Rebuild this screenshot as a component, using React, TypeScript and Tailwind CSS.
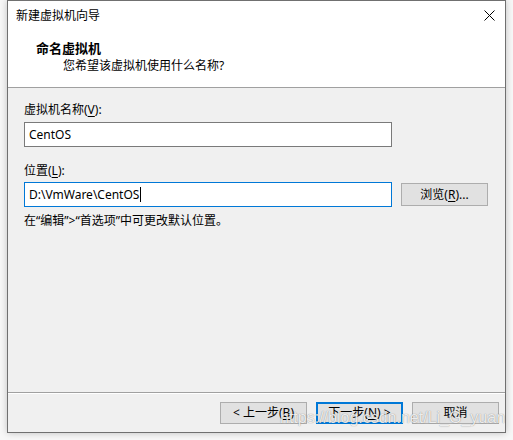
import React from "react";

function Key({ children }: { children: React.ReactNode }) {
  return <span className="underline underline-offset-2">{children}</span>;
}

function Button({
  children,
  focused = false,
}: {
  children: React.ReactNode;
  focused?: boolean;
}) {
  return (
    <button
      className={
        focused
          ? "flex h-[22px] w-[87px] items-center justify-center border-2 border-[#0078d7] bg-[#e1e1e1] text-[12px] leading-none text-black"
          : "flex h-[22px] w-[87px] items-center justify-center border border-[#adadad] bg-[#e1e1e1] text-[12px] leading-none text-black"
      }
    >
      {children}
    </button>
  );
}

export default function App() {
  return (
    <div className="relative h-[440px] w-[513px] overflow-hidden bg-[#f7f7f7] font-['Noto_Sans','Noto_Sans_CJK_SC',sans-serif] text-[12px] text-black">
      <div className="ml-[7px] flex h-[433px] w-[499px] flex-col border border-[#707070] bg-[#f0f0f0] shadow-[0_0_7px_rgba(0,0,0,0.22)]">
        {/* title + header */}
        <div className="flex h-[86px] flex-col bg-white">
          <div className="flex h-[29px] items-center justify-between pl-[8px] pr-[10px]">
            <span className="leading-[16px]">新建虚拟机向导</span>
            <svg width="11" height="11" viewBox="0 0 11 11">
              <path d="M0.5 0.5 L10.5 10.5 M10.5 0.5 L0.5 10.5" stroke="#000" strokeWidth="1" fill="none" />
            </svg>
          </div>
          <div className="pl-[28px] pt-[10px] text-[13px] font-bold leading-[16px]">命名虚拟机</div>
          <div className="pl-[55px] pt-[2px] leading-[16px]">您希望该虚拟机使用什么名称?</div>
        </div>
        <div className="h-px bg-[#a0a0a0]" />

        {/* body */}
        <div className="flex flex-1 flex-col pl-[16px] pt-[14px]">
          <div className="leading-[16px]">
            虚拟机名称(<Key>V</Key>):
          </div>
          <div className="mt-[4px] flex h-[25px] w-[368px] items-center border border-[#7a7a7a] bg-white pl-[4px] leading-none">
            CentOS
          </div>
          <div className="mt-[16px] leading-[16px]">
            位置(<Key>L</Key>):
          </div>
          <div className="mt-[3px] flex items-center gap-[9px]">
            <div className="flex h-[25px] w-[368px] items-center border border-[#0078d7] bg-white pl-[4px] leading-none">
              D:\VmWare\CentOS
              <span className="ml-px inline-block h-[15px] w-px bg-black" />
            </div>
            <button className="flex h-[23px] w-[87px] items-center justify-center border border-[#adadad] bg-[#e1e1e1] text-[12px] leading-none">
              浏览(<Key>R</Key>)...
            </button>
          </div>
          <div className="mt-[6px] leading-[16px]">在“编辑”&gt;“首选项”中可更改默认位置。</div>
        </div>

        {/* footer */}
        <div className="h-px bg-[#a0a0a0]" />
        <div className="h-px bg-white" />
        <div className="flex h-[38px] justify-end gap-[9px] pr-[6px] pt-[8px]">
          <Button>
            &lt; 上一步(<Key>B</Key>)
          </Button>
          <Button focused>
            下一步(<Key>N</Key>) &gt;
          </Button>
          <Button>取消</Button>
        </div>
      </div>

      <div className="pointer-events-none absolute left-[280px] top-[410px] font-['Liberation_Sans',sans-serif] text-[16px] leading-none text-white/85 [text-shadow:0_0_1px_rgba(0,0,0,0.5)]">
        https://blog.csdn.net/Li_G_yuan
      </div>
    </div>
  );
}
